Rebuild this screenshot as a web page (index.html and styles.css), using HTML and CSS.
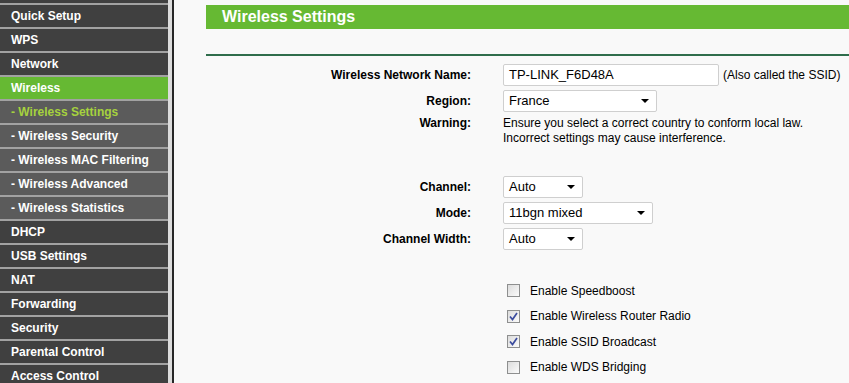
FILE: index.html
```html
<!DOCTYPE html>
<html lang="en">
<head>
    <meta charset="UTF-8">
    <title>Wireless Settings</title>
    <link rel="stylesheet" href="styles.css">
</head>
<body>
    <div class="sidebar">
        <div class="menu-top"></div>
        <div class="menu-item">Quick Setup</div>
        <div class="menu-item">WPS</div>
        <div class="menu-item">Network</div>
        <div class="menu-item active">Wireless</div>
        <div class="menu-item sub current">- Wireless Settings</div>
        <div class="menu-item sub">- Wireless Security</div>
        <div class="menu-item sub">- Wireless MAC Filtering</div>
        <div class="menu-item sub">- Wireless Advanced</div>
        <div class="menu-item sub">- Wireless Statistics</div>
        <div class="menu-item">DHCP</div>
        <div class="menu-item">USB Settings</div>
        <div class="menu-item">NAT</div>
        <div class="menu-item">Forwarding</div>
        <div class="menu-item">Security</div>
        <div class="menu-item">Parental Control</div>
        <div class="menu-item">Access Control</div>
    </div>
    <div class="divider"></div>

    <div class="main">
        <div class="title">Wireless Settings</div>
        <div class="rule"></div>

        <div class="form">
            <div class="row">
                <div class="label">Wireless Network Name:</div>
                <div class="value">
                    <div class="input">TP-LINK_F6D48A</div>
                    <span class="note">(Also called the SSID)</span>
                </div>
            </div>
            <div class="row">
                <div class="label">Region:</div>
                <div class="value">
                    <div class="select region"><span>France</span><i class="caret"></i></div>
                </div>
            </div>
            <div class="row text-row">
                <div class="label">Warning:</div>
                <div class="value text">Ensure you select a correct country to conform local law.<br>Incorrect settings may cause interference.</div>
            </div>
            <div class="spacer"></div>
            <div class="row">
                <div class="label">Channel:</div>
                <div class="value">
                    <div class="select small"><span>Auto</span><i class="caret"></i></div>
                </div>
            </div>
            <div class="row">
                <div class="label">Mode:</div>
                <div class="value">
                    <div class="select mode"><span>11bgn mixed</span><i class="caret"></i></div>
                </div>
            </div>
            <div class="row">
                <div class="label">Channel Width:</div>
                <div class="value">
                    <div class="select small"><span>Auto</span><i class="caret"></i></div>
                </div>
            </div>
            <div class="spacer"></div>
            <div class="row check-row">
                <div class="label"></div>
                <div class="value"><span class="checkbox"></span>Enable Speedboost</div>
            </div>
            <div class="row check-row">
                <div class="label"></div>
                <div class="value"><span class="checkbox checked"><svg width="11" height="11" viewBox="0 0 11 11"><path d="M2 5.5 L4.5 8.5 L9 2" fill="none" stroke="#3b4c9e" stroke-width="1.7"/></svg></span>Enable Wireless Router Radio</div>
            </div>
            <div class="row check-row">
                <div class="label"></div>
                <div class="value"><span class="checkbox checked"><svg width="11" height="11" viewBox="0 0 11 11"><path d="M2 5.5 L4.5 8.5 L9 2" fill="none" stroke="#3b4c9e" stroke-width="1.7"/></svg></span>Enable SSID Broadcast</div>
            </div>
            <div class="row check-row">
                <div class="label"></div>
                <div class="value"><span class="checkbox"></span>Enable WDS Bridging</div>
            </div>
        </div>
    </div>
</body>
</html>
```

FILE: styles.css
```css
/* Base */
* {
    box-sizing: border-box;
}
body {
    margin: 0;
    display: flex;
    height: 383px;
    overflow: hidden;
    background: #f9f9f9;
    font-family: 'Liberation Sans', Arial, sans-serif;
    font-size: 12px;
    color: #000;
}

/* Left menu */
.sidebar {
    width: 168px;
    flex-shrink: 0;
    background: #404040;
}
.menu-top {
    height: 3px;
    background: #404040;
}
.menu-item {
    height: 24px;
    line-height: 22px;
    border-top: 2px solid #a2a2a2;
    padding-left: 11px;
    background: #404040;
    color: #fff;
    font-weight: bold;
    white-space: nowrap;
}
.menu-item.active {
    background: #66b933;
}
.menu-item.sub {
    background: #5b5b5b;
}
.menu-item.current {
    color: #a6d23e;
}

.divider {
    width: 6px;
    flex-shrink: 0;
    background: #dcdcdc;
    border-right: 2px solid #272727;
}

/* Content */
.main {
    flex: 1;
    padding: 5px 0 0 32px;
}
.title {
    height: 24px;
    line-height: 24px;
    padding-left: 16px;
    background: #66b933;
    color: #fff;
    font-size: 16px;
    font-weight: bold;
}
.rule {
    height: 2px;
    margin-top: 25px;
    background: #2f6d4c;
}

/* Form rows */
.form {
    display: flex;
    flex-direction: column;
    gap: 4px;
    margin-top: 8px;
}
.row {
    display: grid;
    grid-template-columns: 265px 1fr;
    column-gap: 32px;
    height: 22px;
    align-items: center;
}
.label {
    text-align: right;
    font-weight: bold;
    white-space: nowrap;
}
.value {
    display: flex;
    align-items: center;
    white-space: nowrap;
}
.text-row {
    height: auto;
    align-items: start;
    line-height: 15px;
}
.text {
    display: block;
}
.spacer {
    height: 22px;
}

.input {
    width: 216px;
    height: 22px;
    line-height: 20px;
    padding-left: 5px;
    background: #fff;
    border: 1px solid #cfcfcf;
    border-radius: 2px;
    font-size: 13px;
}
.note {
    margin-left: 4px;
}

.select {
    position: relative;
    height: 22px;
    line-height: 20px;
    padding-left: 5px;
    background: #fff;
    border: 1px solid #cfcfcf;
    border-radius: 2px;
    font-size: 13px;
}
.select.region {
    width: 154px;
}
.select.small {
    width: 80px;
}
.select.mode {
    width: 150px;
}
.caret {
    position: absolute;
    right: 7px;
    top: 8px;
    border-left: 4px solid transparent;
    border-right: 4px solid transparent;
    border-top: 4px solid #000;
}

/* Checkboxes */
.check-row {
    height: 21.5px;
}
.checkbox {
    width: 13px;
    height: 13px;
    margin: 0 10px 0 4px;
    border: 1px solid #8e8f8f;
    background: linear-gradient(135deg, #dcdcdc, #fbfbfb);
    display: inline-flex;
    align-items: center;
    justify-content: center;
}
.checkbox svg {
    display: block;
}
```
